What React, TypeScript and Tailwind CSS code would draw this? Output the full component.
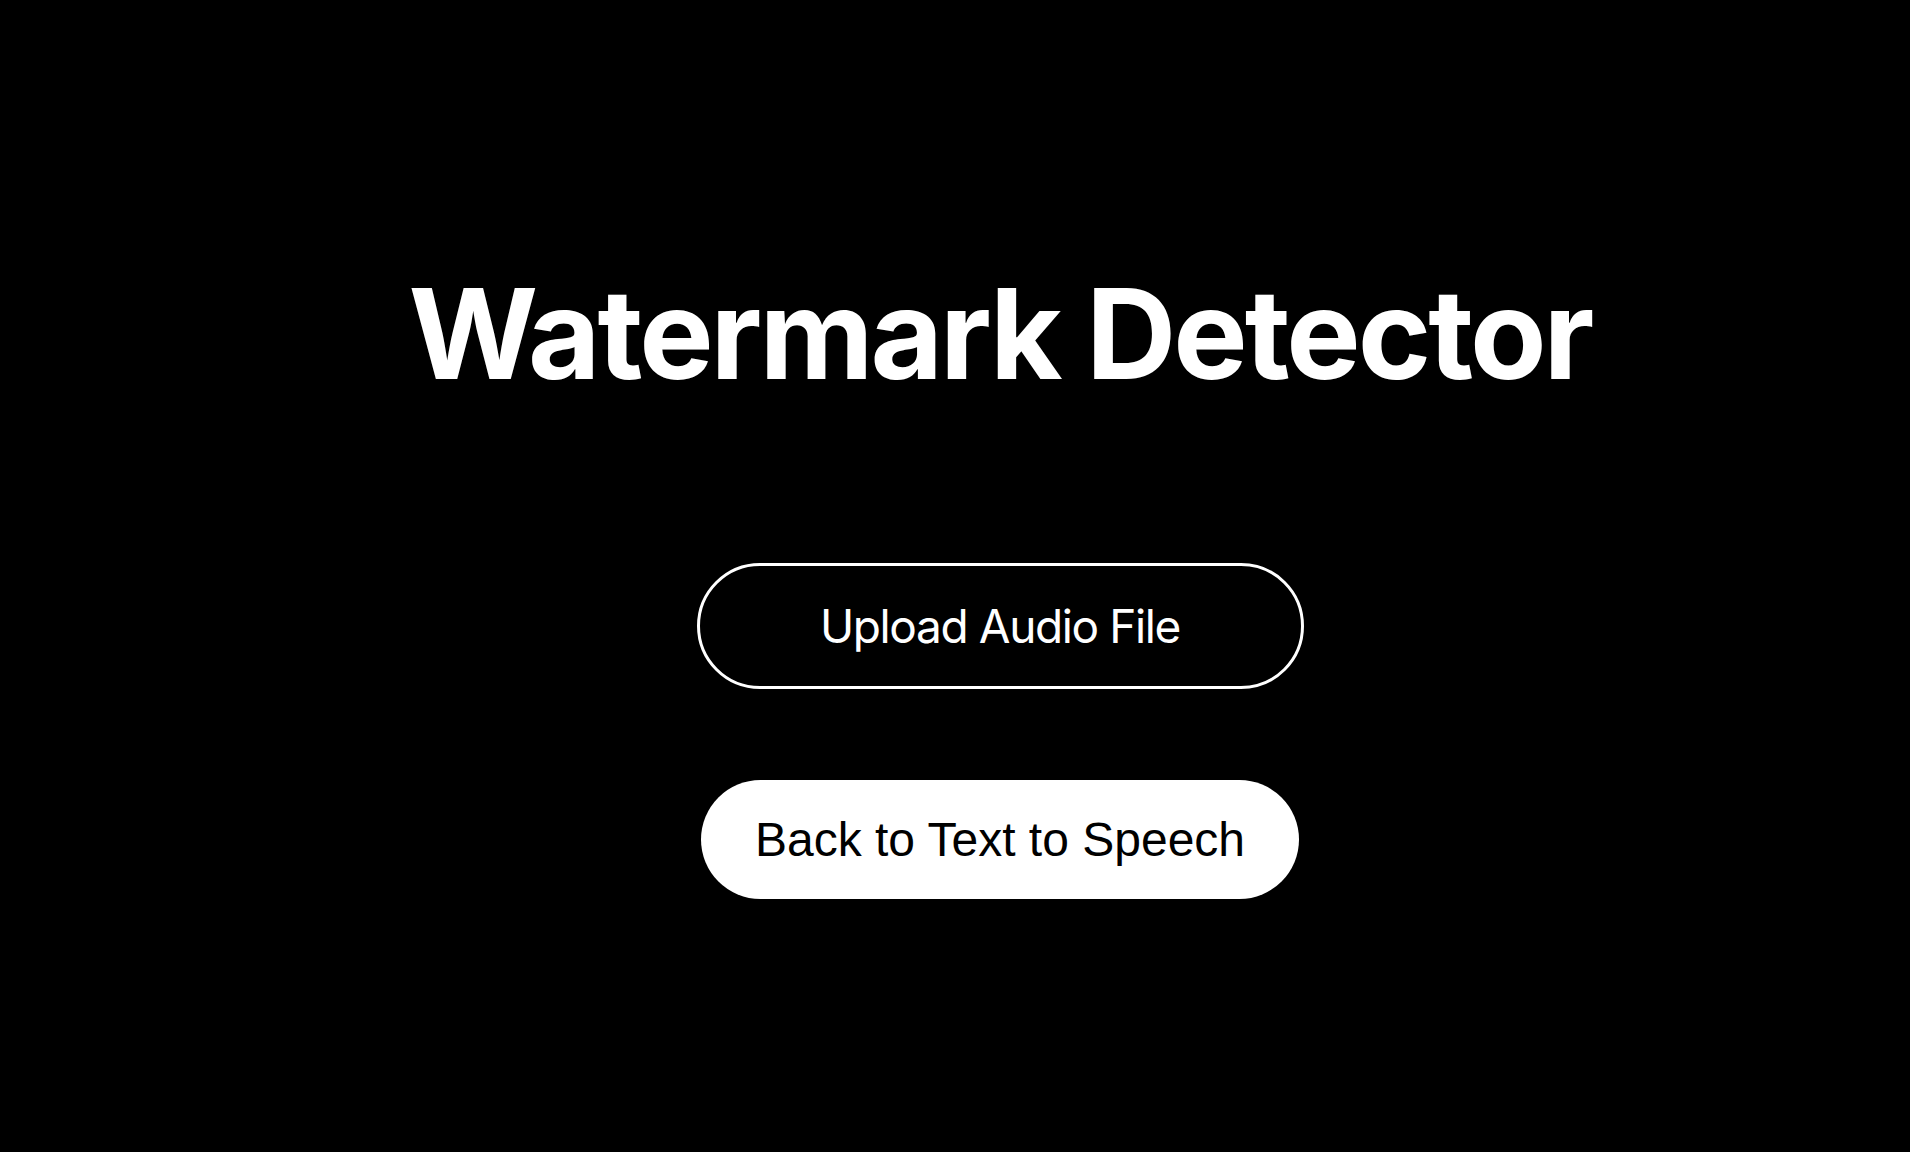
export default function App() {
  return (
    <div className="min-h-screen w-full bg-black flex flex-col items-center pl-[90px] pt-[271px]">
      <h1 className="font-['Inter',sans-serif] text-[125px] leading-none font-bold text-white tracking-[-0.024em]">
        Watermark Detector
      </h1>

      <button
        type="button"
        className="mt-[167px] flex h-[126px] w-[607px] items-center justify-center rounded-full border-[3px] border-white bg-black font-['Inter',sans-serif] text-[46px] text-white tracking-[-0.03em]"
      >
        Upload Audio File
      </button>

      <button
        type="button"
        className="mt-[91px] flex h-[119px] w-[598px] items-center justify-center rounded-full bg-white font-['Liberation_Sans',Arial,sans-serif] text-[48px] text-black"
      >
        Back to Text to Speech
      </button>
    </div>
  );
}
